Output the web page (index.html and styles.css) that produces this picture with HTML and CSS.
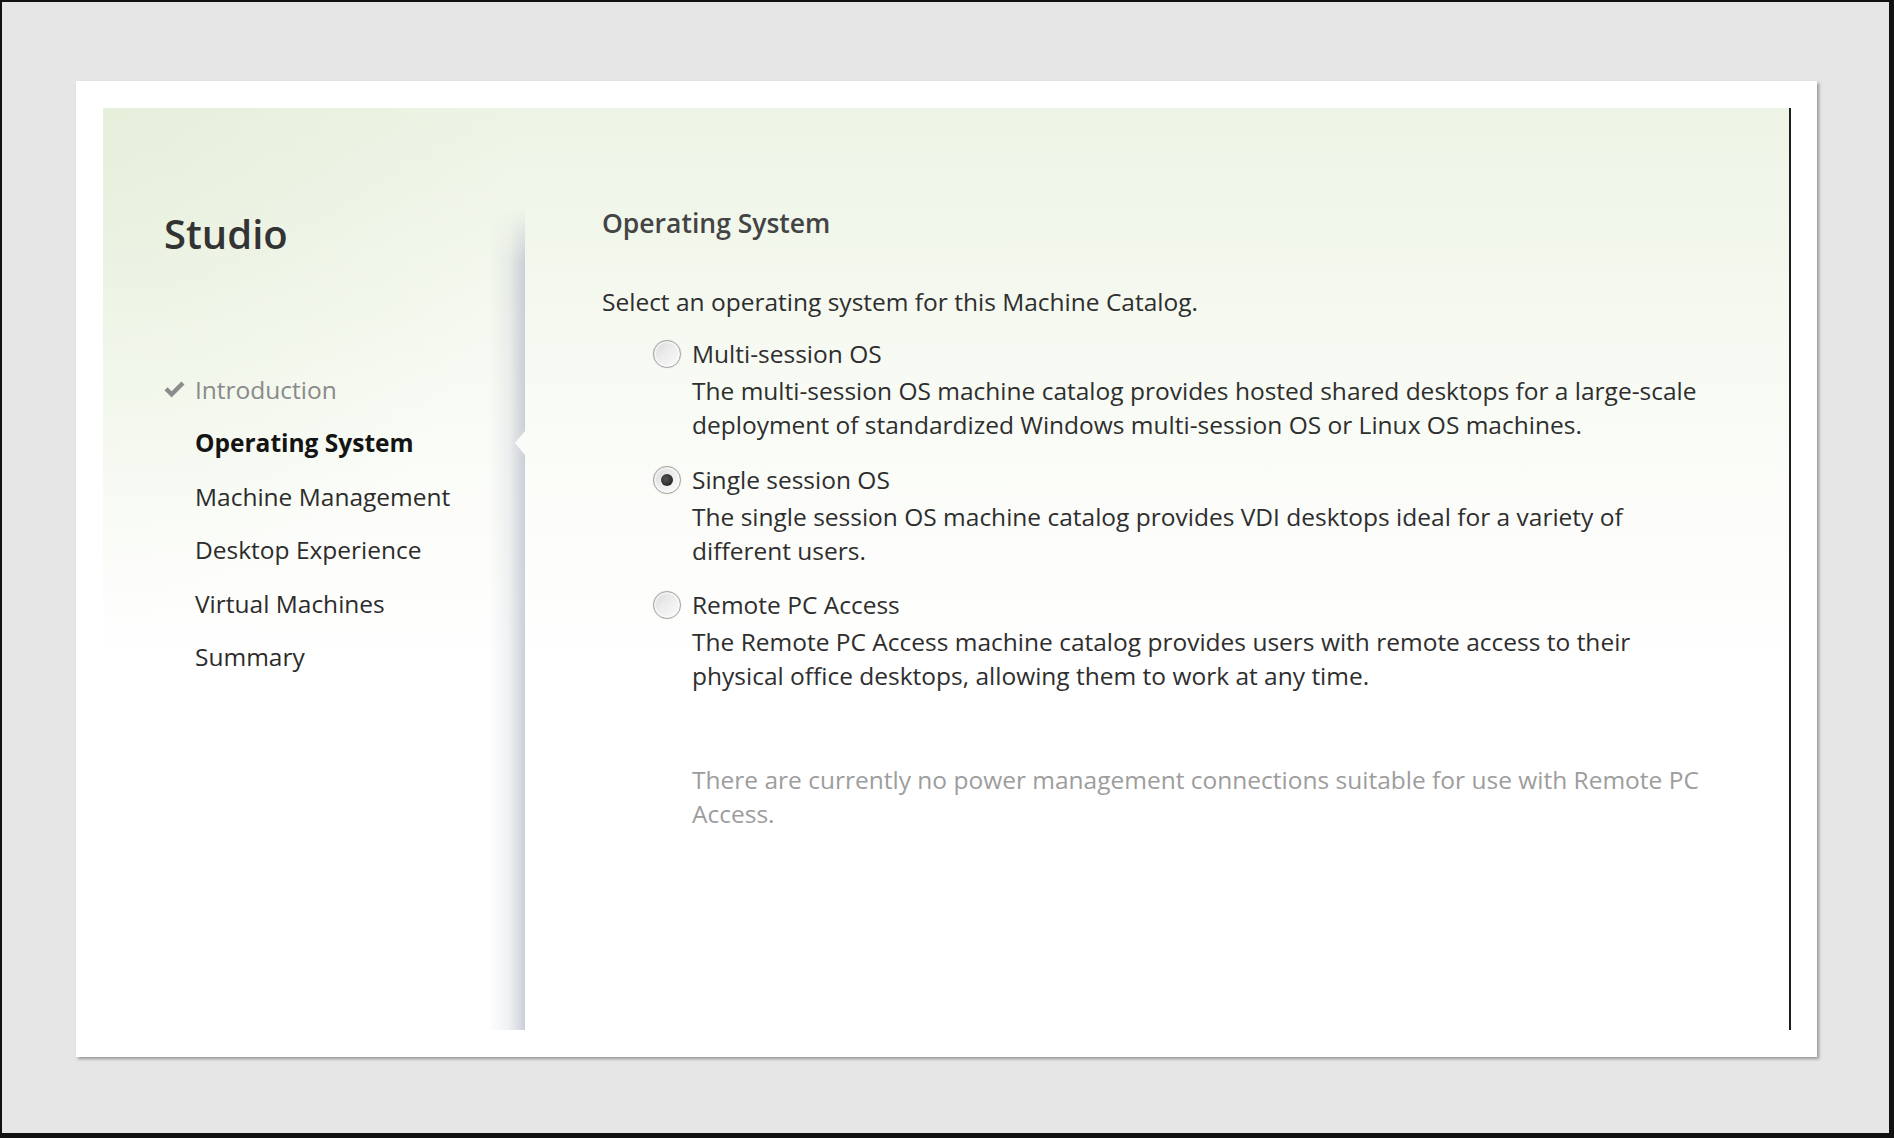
FILE: index.html
```html
<!DOCTYPE html>
<html lang="en">
<head>
<meta charset="utf-8">
<title>Studio - Operating System</title>
<link rel="stylesheet" href="styles.css">
</head>
<body>
<div class="screen">
  <div class="card">
    <div class="wizard">
      <nav class="nav">
        <div class="brand">Studio</div>
        <ul class="steps">
          <li class="step done">
            <span class="check"><svg width="21" height="17" viewBox="0 0 21 17"><path d="M0.5 9.2 L3.6 6.2 L7.6 10.2 L17.4 0.4 L20.5 3.5 L7.6 16.4 Z" fill="#8c8c8c"/></svg></span>
            <span>Introduction</span>
          </li>
          <li class="step active"><span class="check"></span><span>Operating System</span></li>
          <li class="step"><span class="check"></span><span>Machine Management</span></li>
          <li class="step"><span class="check"></span><span>Desktop Experience</span></li>
          <li class="step"><span class="check"></span><span>Virtual Machines</span></li>
          <li class="step"><span class="check"></span><span>Summary</span></li>
        </ul>
      </nav>
      <main class="content">
        <h1 class="title">Operating System</h1>
        <p class="lead">Select an operating system for this Machine Catalog.</p>
        <div class="options">
          <div class="option">
            <span class="radio"></span>
            <div class="label">Multi-session OS</div>
            <div class="desc">The multi-session OS machine catalog provides hosted shared desktops for a large-scale<br>deployment of standardized Windows multi-session OS or Linux OS machines.</div>
          </div>
          <div class="option">
            <span class="radio checked"></span>
            <div class="label">Single session OS</div>
            <div class="desc">The single session OS machine catalog provides VDI desktops ideal for a variety of<br>different users.</div>
          </div>
          <div class="option">
            <span class="radio"></span>
            <div class="label">Remote PC Access</div>
            <div class="desc">The Remote PC Access machine catalog provides users with remote access to their<br>physical office desktops, allowing them to work at any time.</div>
          </div>
        </div>
        <p class="note">There are currently no power management connections suitable for use with Remote PC<br>Access.</p>
      </main>
    </div>
  </div>
</div>
</body>
</html>
```
FILE: styles.css
```css
* { box-sizing: border-box; }
html, body { margin: 0; padding: 0; }
body {
  font-family: "Open Sans", "Noto Sans", "DejaVu Sans", sans-serif;
  color: #333;
}
.screen {
  width: 1894px;
  height: 1138px;
  border-style: solid;
  border-color: #111;
  border-width: 2px 5px 5px 2px;
  background: #e6e6e6;
  padding: 79px 0 0 74px;
}
.card {
  width: 1741px;
  height: 976px;
  background: #fff;
  padding: 27px 26px 27px 27px;
  box-shadow: 2px 2px 3px rgba(0, 0, 0, 0.35);
}
.wizard {
  display: flex;
  height: 922px;
  border-right: 2px solid #1e1e1e;
  background:
    radial-gradient(ellipse 420px 520px at 0 0, rgba(222, 234, 208, 0.5), rgba(222, 234, 208, 0) 100%),
    linear-gradient(180deg, #edf4e5 0%, #f2f7ec 14%, #f8fbf4 30%, #fcfdfa 45%, #ffffff 62%);
}
.nav {
  width: 422px;
  flex: none;
  position: relative;
  padding: 101.5px 0 0 61px;
}
.nav::after {
  content: "";
  position: absolute;
  top: 0;
  right: 0;
  bottom: 0;
  width: 36px;
  background: linear-gradient(to right, rgba(200, 205, 214, 0), rgba(200, 205, 214, 0.28) 55%, rgba(190, 196, 207, 0.8));
  -webkit-mask-image: linear-gradient(to bottom, transparent 100px, #000 155px);
  mask-image: linear-gradient(to bottom, transparent 100px, #000 155px);
}
.brand {
  font-size: 40px;
  line-height: 48px;
  font-weight: 600;
  color: #333;
}
.steps {
  list-style: none;
  margin: 105.5px 0 0;
  padding: 0;
}
.step {
  position: relative;
  display: flex;
  align-items: center;
  height: 53.4px;
  font-size: 24.5px;
  line-height: 53.4px;
  color: #2c2c2c;
}
.check {
  width: 31px;
  flex: none;
  display: flex;
  align-items: center;
}
.step.done { color: #8a8a8a; }
.step.active { font-weight: 700; color: #141414; }
.step.active::after {
  content: "";
  position: absolute;
  right: 0;
  top: 50%;
  margin-top: -12px;
  border-style: solid;
  border-width: 12px 10px 12px 0;
  border-color: transparent #fbfcf9 transparent transparent;
  z-index: 2;
}
.content {
  flex: 1;
  padding: 100px 0 0 77px;
  color: #2e2e2e;
}
.title {
  margin: 0;
  font-size: 26.5px;
  line-height: 30px;
  font-weight: 600;
  color: #444;
}
.lead {
  margin: 47.4px 0 0;
  font-size: 24.5px;
  line-height: 34px;
}
.options {
  margin: 15px 0 0 51px;
  display: flex;
  flex-direction: column;
  gap: 17.5px;
}
.option {
  display: grid;
  grid-template-columns: 39px auto;
  font-size: 24.5px;
}
.radio {
  grid-row: 1;
  grid-column: 1;
  align-self: center;
  position: relative;
  width: 28px;
  height: 28px;
  border-radius: 50%;
  border: 1px solid #a3a3a3;
  background: linear-gradient(135deg, #d9d9d9 0%, #ececec 45%, #fbfbfb 100%);
  box-shadow: 0 0 1px rgba(0, 0, 0, 0.25), inset 0 0 0 2px rgba(255, 255, 255, 0.55);
}
.radio.checked::after {
  content: "";
  position: absolute;
  left: 7px;
  top: 7px;
  width: 12px;
  height: 12px;
  border-radius: 50%;
  background: radial-gradient(circle at 40% 40%, #555 0%, #2a2a2a 70%);
}
.label {
  grid-row: 1;
  grid-column: 2;
  line-height: 40px;
  white-space: nowrap;
}
.desc {
  grid-row: 2;
  grid-column: 2;
  line-height: 34px;
  white-space: nowrap;
}
.note {
  margin: 70px 0 0 90px;
  font-size: 24.5px;
  line-height: 34px;
  color: #9d9d9d;
  white-space: nowrap;
}
```
